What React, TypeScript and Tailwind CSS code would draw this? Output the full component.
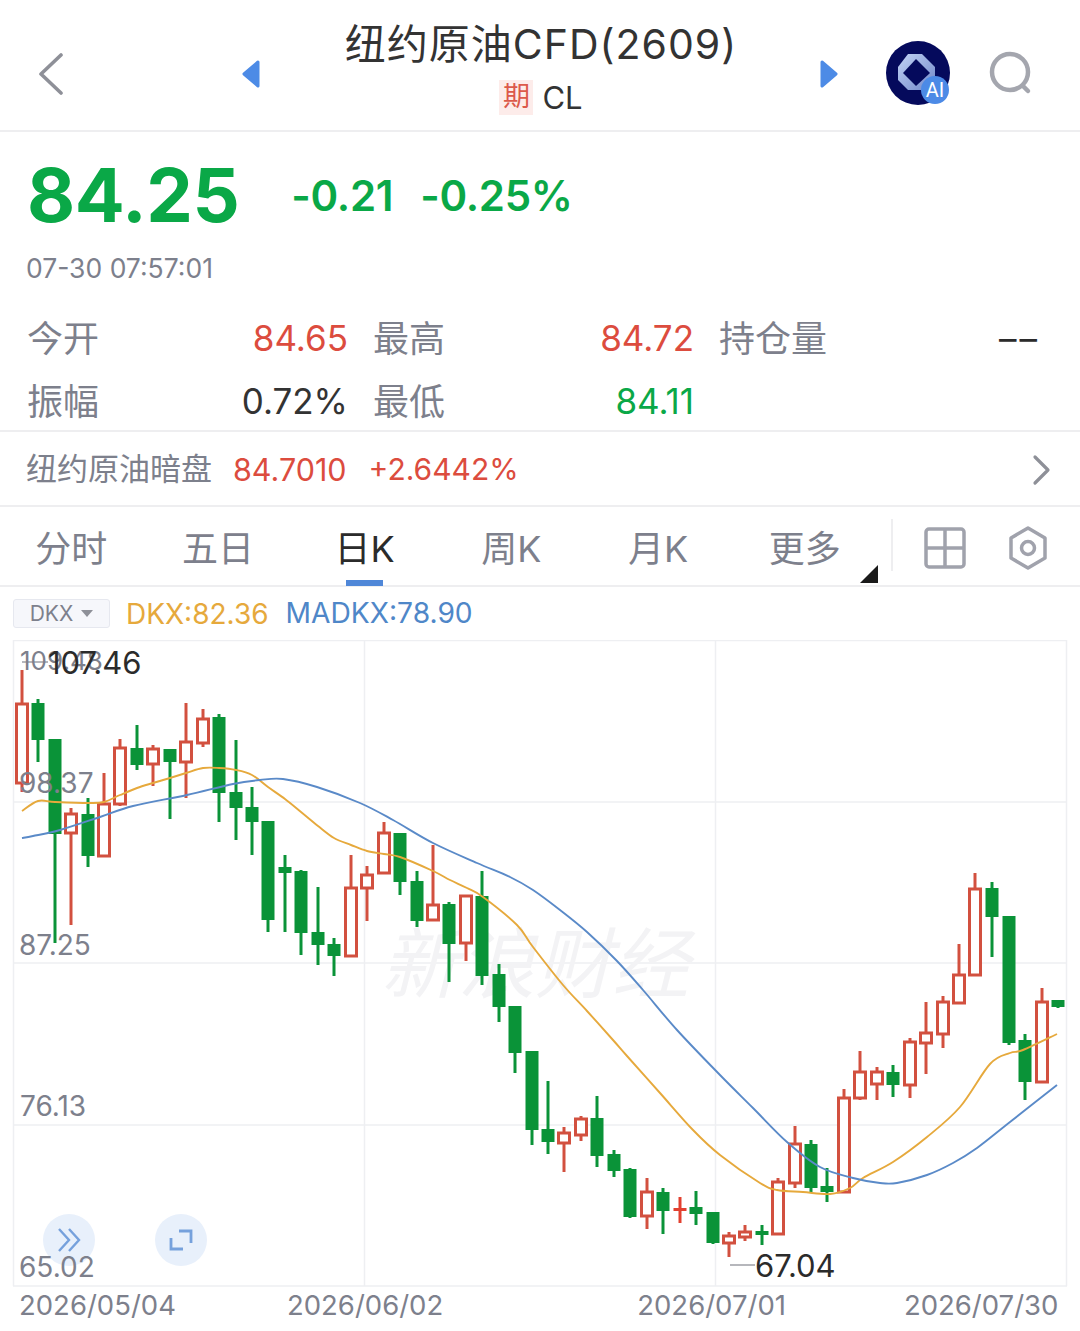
const font = "font-['Inter','Noto_Sans_CJK_SC',sans-serif]";

// x, high, top, bottom, low, kind
type Candle = [number, number, number, number, number, 'r' | 'g' | 's'];

const candles: Candle[] = [
  [22, 670, 704, 783, 792, 'r'], [38, 699, 703, 740, 762, 'g'], [55, 739, 739, 834, 943, 'g'],
  [71, 808, 814, 833, 925, 'r'], [88, 798, 814, 856, 867, 'g'], [104, 773, 804, 856, 856, 'r'],
  [120, 739, 748, 804, 806, 'r'], [137, 725, 748, 765, 770, 'g'], [153, 745, 749, 764, 786, 'r'],
  [170, 749, 749, 762, 819, 'g'], [186, 703, 742, 762, 798, 'r'], [203, 709, 719, 743, 747, 'r'],
  [219, 714, 717, 793, 822, 'g'], [236, 740, 792, 808, 840, 'g'], [252, 787, 807, 822, 855, 'g'],
  [268, 821, 821, 920, 932, 'g'], [285, 855, 867, 873, 932, 'g'], [301, 870, 871, 933, 955, 'g'],
  [318, 887, 932, 945, 965, 'g'], [334, 938, 944, 956, 976, 'g'], [351, 855, 888, 956, 956, 'r'],
  [367, 866, 875, 888, 921, 'r'], [384, 822, 833, 873, 873, 'r'], [400, 833, 833, 882, 895, 'g'],
  [417, 871, 881, 921, 927, 'g'], [433, 845, 905, 920, 920, 'r'], [449, 902, 904, 944, 982, 'g'],
  [466, 896, 896, 943, 961, 'r'], [482, 871, 896, 976, 985, 'g'], [499, 964, 974, 1007, 1022, 'g'],
  [515, 1006, 1006, 1053, 1073, 'g'], [532, 1051, 1051, 1130, 1145, 'g'], [548, 1081, 1129, 1142, 1154, 'g'],
  [564, 1127, 1133, 1143, 1172, 'r'], [581, 1116, 1119, 1135, 1141, 'r'], [597, 1096, 1118, 1156, 1167, 'g'],
  [614, 1150, 1154, 1171, 1177, 'g'], [630, 1168, 1169, 1217, 1218, 'g'], [647, 1178, 1192, 1216, 1229, 'r'],
  [663, 1188, 1192, 1211, 1234, 'g'], [680, 1197, 1208, 1211, 1223, 's'], [696, 1191, 1207, 1214, 1225, 'g'],
  [713, 1212, 1212, 1243, 1244, 'g'], [729, 1232, 1236, 1243, 1257, 'r'], [745, 1225, 1232, 1237, 1241, 'r'],
  [762, 1225, 1231, 1235, 1245, 'g'], [778, 1178, 1182, 1234, 1234, 'r'], [795, 1126, 1144, 1183, 1188, 'r'],
  [811, 1140, 1144, 1188, 1192, 'g'], [827, 1168, 1186, 1192, 1202, 'g'], [844, 1089, 1098, 1192, 1192, 'r'],
  [860, 1051, 1072, 1098, 1100, 'r'], [877, 1067, 1072, 1084, 1100, 'r'], [893, 1065, 1072, 1085, 1097, 'g'],
  [910, 1038, 1042, 1085, 1098, 'r'], [926, 1002, 1033, 1043, 1074, 'r'], [943, 996, 1002, 1034, 1048, 'r'],
  [959, 944, 975, 1003, 1003, 'r'], [975, 873, 889, 975, 975, 'r'], [992, 882, 888, 917, 957, 'g'],
  [1009, 916, 916, 1043, 1045, 'g'], [1025, 1034, 1040, 1082, 1100, 'g'], [1042, 988, 1002, 1082, 1082, 'r'],
  [1058, 1000, 1000, 1007, 1008, 'g'],
];

const dkx = [
  [22, 811], [38, 801], [55, 802], [88, 803], [104, 802], [120, 795], [137, 788], [153, 783], [170, 778], [186, 773],
  [203, 768], [219, 768], [236, 770], [252, 775], [268, 787], [285, 799], [301, 812], [318, 826], [334, 838], [351, 845],
  [367, 851], [384, 854], [400, 857], [433, 871], [450, 880], [467, 888], [483, 897], [517, 925], [533, 947], [563, 985],
  [587, 1011], [613, 1040], [627, 1056], [660, 1093], [693, 1130], [720, 1155], [760, 1183], [777, 1190], [803, 1192],
  [830, 1194], [850, 1188], [863, 1178], [893, 1162], [927, 1137], [960, 1107], [990, 1064], [1010, 1053], [1023, 1050],
  [1057, 1034],
];

const madkx = [
  [22, 838], [33, 836], [60, 830], [100, 817], [133, 806], [187, 795], [233, 784], [260, 780], [283, 779], [317, 787],
  [360, 803], [393, 820], [433, 843], [477, 863], [510, 877], [533, 890], [560, 910], [587, 932], [617, 961], [643, 990],
  [677, 1030], [720, 1075], [753, 1108], [787, 1142], [820, 1167], [853, 1178], [880, 1183], [897, 1183], [927, 1175],
  [953, 1163], [977, 1148], [1010, 1122], [1057, 1085],
];

// catmull-rom through the points, chart box starts at y=640
const toPath = (pts: number[][]) => {
  const p = pts.map(([x, y]) => [x, y - 640]);
  let d = `M${p[0][0]} ${p[0][1]}`;
  for (let i = 0; i < p.length - 1; i++) {
    const a = p[Math.max(i - 1, 0)];
    const b = p[i];
    const c = p[i + 1];
    const e = p[Math.min(i + 2, p.length - 1)];
    const c1 = [b[0] + (c[0] - a[0]) / 6, b[1] + (c[1] - a[1]) / 6];
    const c2 = [c[0] - (e[0] - b[0]) / 6, c[1] - (e[1] - b[1]) / 6];
    d += ` C${c1[0]} ${c1[1]} ${c2[0]} ${c2[1]} ${c[0]} ${c[1]}`;
  }
  return d;
};

const tabs = ['分时', '五日', '日K', '周K', '月K', '更多'];

function Stat({ label, value, color }: { label: string; value: string; color: string }) {
  return (
    <div className="flex items-center justify-between h-[63px]">
      <span className="text-[36px] text-[#7d808c]">{label}</span>
      <span className={`text-[35px] ${color}`}>{value}</span>
    </div>
  );
}

function Chart() {
  return (
    <svg width="1080" height="650" className="block">
      {[0.5, 162, 323, 485, 646].map((y) => (
        <line key={y} x1="13" x2="1067" y1={y} y2={y} stroke="#eeeff2" strokeWidth="1.5" />
      ))}
      {[13.5, 364.5, 715.5, 1066.5].map((x) => (
        <line key={x} x1={x} x2={x} y1="0" y2="646" stroke="#eeeff2" strokeWidth="1.5" />
      ))}
      <text
        x="381"
        y="352"
        fontSize="77"
        fontStyle="italic"
        fill="#f3f3f5"
        fontFamily="'Noto Sans CJK SC', sans-serif"
      >
        新浪财经
      </text>
      {candles.map(([x, hi, top, bot, lo, kind]) => {
        const color = kind === 'g' ? '#0a9338' : kind === 's' ? '#e2402f' : '#d2503f';
        return (
          <g key={x}>
            <line x1={x} x2={x} y1={hi - 640} y2={top - 640} stroke={color} strokeWidth="3" />
            <line x1={x} x2={x} y1={bot - 640} y2={lo - 640} stroke={color} strokeWidth="3" />
            {kind === 'r' ? (
              <rect x={x - 5.5} y={top - 640} width="11" height={bot - top} fill="#fff" stroke={color} strokeWidth="3" />
            ) : (
              <rect x={x - 6.5} y={top - 640} width="13" height={bot - top} fill={color} />
            )}
          </g>
        );
      })}
      <path d={toPath(dkx)} fill="none" stroke="#e6a93c" strokeWidth="1.9" />
      <path d={toPath(madkx)} fill="none" stroke="#5a8ac8" strokeWidth="1.9" />
      <line x1="22" x2="48" y1="22" y2="22" stroke="#85878f" strokeWidth="1.2" />
      <line x1="730" x2="755" y1="625" y2="625" stroke="#85878f" strokeWidth="1.2" />
    </svg>
  );
}

export default function App() {
  return (
    <div className={`w-[1080px] h-[1331px] bg-white overflow-hidden text-[#2b2b2b] ${font}`}>
      {/* Header */}
      <div className="flex items-center h-[132px] pt-[18px] border-b-2 border-[#eeeef0]">
        <svg width="26" height="42" viewBox="0 0 26 42" className="ml-[38px]">
          <path d="M23 2 L3 21 L23 40" fill="none" stroke="#8e9098" strokeWidth="3.6" strokeLinecap="round" strokeLinejoin="round" />
        </svg>
        <svg width="20" height="28" viewBox="0 0 20 28" className="ml-[177px]">
          <path d="M17 2 L3 14 L17 26 Z" fill="#4d8be6" stroke="#4d8be6" strokeWidth="3" strokeLinejoin="round" />
        </svg>
        <div className="w-[558px] flex flex-col items-center mb-[15px] pl-[2px]">
          <div className="text-[41px] leading-[52px] tracking-[1px] text-[#333]">纽约原油CFD(2609)</div>
          <div className="flex items-center gap-[9px] mt-[10px]">
            <span className="w-[34px] h-[35px] flex items-center justify-center bg-[#fdecea] text-[#dc5a4a] text-[27px]">期</span>
            <span className="text-[31px] leading-[35px] text-[#333]">CL</span>
          </div>
        </div>
        <svg width="20" height="28" viewBox="0 0 20 28">
          <path d="M3 2 L17 14 L3 26 Z" fill="#4d8be6" stroke="#4d8be6" strokeWidth="3" strokeLinejoin="round" />
        </svg>
        <svg width="66" height="66" viewBox="0 0 66 66" className="ml-[47px]">
          <defs>
            <linearGradient id="ring" x1="0" y1="0" x2="1" y2="1">
              <stop offset="0" stopColor="#c3d4f6" />
              <stop offset="1" stopColor="#6f86c8" />
            </linearGradient>
          </defs>
          <circle cx="32" cy="32" r="32" fill="#050a5c" />
          <path d="M22 13 L36 13 L49 26 L49 39 L36 49 L22 49 L12 39 L12 26 Z" fill="url(#ring)" />
          <path d="M30 18 L44 32 L30 45 L17 32 Z" fill="#050a5c" />
          <circle cx="49" cy="49" r="14" fill="#4c8ae6" />
          <text x="49" y="56" textAnchor="middle" fontSize="20" fill="#fff" fontFamily="Roboto, sans-serif">AI</text>
        </svg>
        <svg width="48" height="48" viewBox="0 0 48 48" className="ml-[37px] mt-[1px]">
          <circle cx="21" cy="21" r="18" fill="none" stroke="#a4a6ae" strokeWidth="4.5" />
          <path d="M34 35 L39 40" stroke="#a4a6ae" strokeWidth="4.5" strokeLinecap="round" />
        </svg>
      </div>

      {/* Price */}
      <div className="flex items-center h-[121px] pl-[27px] pt-[5px]">
        <span className="text-[74px] leading-none font-bold text-[#0aa847] tracking-[-0.4px]">84.25</span>
        <span className="ml-[52px] text-[42px] font-semibold text-[#0aa847] mt-[1px] tracking-[-0.3px]">-0.21</span>
        <span className="ml-[27px] text-[42px] font-semibold text-[#0aa847] mt-[1px] tracking-[-0.3px]">-0.25%</span>
      </div>
      <div className="pl-[26px] text-[26.5px] leading-[30px] text-[#7d808c]">07-30 07:57:01</div>

      {/* Stats */}
      <div className="grid grid-cols-3 gap-x-[25px] pl-[27px] pr-[40px] mt-[24px]">
        <Stat label="今开" value="84.65" color="text-[#dc4c3e]" />
        <Stat label="最高" value="84.72" color="text-[#dc4c3e]" />
        <Stat label="持仓量" value="––" color="text-[#2b2b2b] tracking-[3px]" />
        <Stat label="振幅" value="0.72%" color="text-[#333]" />
        <Stat label="最低" value="84.11" color="text-[#0aa847]" />
      </div>

      {/* Dark pool row */}
      <div className="flex items-center h-[77px] mt-[-3px] border-y-2 border-[#eeeef0] pl-[26px] pr-[28px] pt-[2px]">
        <span className="text-[31px] text-[#7d808c]">纽约原油暗盘</span>
        <span className="ml-[21px] text-[30.5px] text-[#dc4c3e]">84.7010</span>
        <span className="ml-[22px] text-[30px] text-[#dc4c3e]">+2.6442%</span>
        <svg width="20" height="32" viewBox="0 0 20 32" className="ml-auto">
          <path d="M3 3 L16 16 L3 29" fill="none" stroke="#8e9098" strokeWidth="3.2" strokeLinecap="round" strokeLinejoin="round" />
        </svg>
      </div>

      {/* Tabs */}
      <div className="relative flex items-center h-[80px] pt-[6px] border-b-2 border-[#eeeef0]">
        <div className="flex ml-[-2px] w-[880px]">
          {tabs.map((t) => (
            <div key={t} className="relative flex-1 flex justify-center">
              <span className={`text-[36px] leading-[70px] ${t === '日K' ? 'text-[#2b2b2b]' : 'text-[#7d808c]'}`}>{t}</span>
              {t === '日K' && <span className="absolute bottom-[-2px] w-[37px] h-[6px] bg-[#4f87d8]" />}
            </div>
          ))}
        </div>
        <svg width="18" height="18" viewBox="0 0 18 18" className="absolute left-[860px] top-[58px]">
          <path d="M18 0 L18 18 L0 18 Z" fill="#1a1a1a" />
        </svg>
        <div className="w-[2px] h-[52px] bg-[#eeeef0] ml-[13px] mb-[8px]" />
        <svg width="42" height="42" viewBox="0 0 42 42" className="ml-[31px] mb-[2px]">
          <rect x="2" y="2" width="38" height="38" rx="3" fill="none" stroke="#a0a2ac" strokeWidth="3.5" />
          <path d="M21 2 V40 M2 21 H40" stroke="#a0a2ac" strokeWidth="3.5" />
        </svg>
        <svg width="42" height="44" viewBox="0 0 42 44" className="ml-[41px] mb-[2px]">
          <path d="M21 2 L38 12 V32 L21 42 L4 32 V12 Z" fill="none" stroke="#a0a2ac" strokeWidth="3.5" strokeLinejoin="round" />
          <circle cx="21" cy="22" r="6.5" fill="none" stroke="#a0a2ac" strokeWidth="3.5" />
        </svg>
      </div>

      {/* Indicator */}
      <div className="flex items-center h-[53px] pl-[13px]">
        <div className="flex items-center justify-center gap-[8px] w-[97px] h-[29px] bg-[#f6f7fb] border border-[#e6e8ef] rounded-[3px] text-[21px] text-[#7d808c]">
          DKX
          <svg width="12" height="7" viewBox="0 0 12 7">
            <path d="M0 0 H12 L6 7 Z" fill="#8e9098" />
          </svg>
        </div>
        <span className="ml-[16px] text-[28px] text-[#e6a93c]">DKX:82.36</span>
        <span className="ml-[17px] text-[28.2px] text-[#4f87c8]">MADKX:78.90</span>
      </div>

      {/* Chart */}
      <div className="relative">
        <Chart />
        <span className="absolute left-[20px] top-[3px] text-[26px] leading-[36px] text-[#7d808c]">109.48</span>
        <span className="absolute left-[48px] top-[5px] text-[31px] leading-[36px] text-[#2b2b2b]">107.46</span>
        <span className="absolute left-[19px] top-[125px] text-[28px] leading-[36px] text-[#7d808c]">98.37</span>
        <span className="absolute left-[19px] top-[287px] text-[28px] leading-[36px] text-[#7d808c]">87.25</span>
        <span className="absolute left-[20px] top-[448px] text-[28px] leading-[36px] text-[#7d808c]">76.13</span>
        <span className="absolute left-[755px] top-[608px] text-[31px] leading-[36px] text-[#2b2b2b]">67.04</span>
        <div className="absolute left-[43px] top-[574px] w-[52px] h-[52px] rounded-full bg-[#e8f0fb] flex items-center justify-center">
          <svg width="26" height="26" viewBox="0 0 26 26">
            <path d="M3 2 L13 13 L3 24 M13 2 L23 13 L13 24" fill="none" stroke="#76a1dc" strokeWidth="2.4" />
          </svg>
        </div>
        <div className="absolute left-[155px] top-[574px] w-[52px] h-[52px] rounded-full bg-[#e8f0fb] flex items-center justify-center">
          <svg width="24" height="24" viewBox="0 0 24 24">
            <path d="M10 3 H22 V15 M2 10 V21 H14" fill="none" stroke="#76a1dc" strokeWidth="2.8" />
          </svg>
        </div>
        <span className="absolute left-[19px] top-[609px] text-[28px] leading-[36px] text-[#7d808c]">65.02</span>
      </div>

      {/* Dates */}
      <div className="flex pl-[19px] text-[27.5px] leading-[36px] text-[#7d808c] mt-[-3px]">
        <span>2026/05/04</span>
        <span className="ml-[111px]">2026/06/02</span>
        <span className="ml-[194px]">2026/07/01</span>
        <span className="ml-[118px]">2026/07/30</span>
      </div>
    </div>
  );
}
